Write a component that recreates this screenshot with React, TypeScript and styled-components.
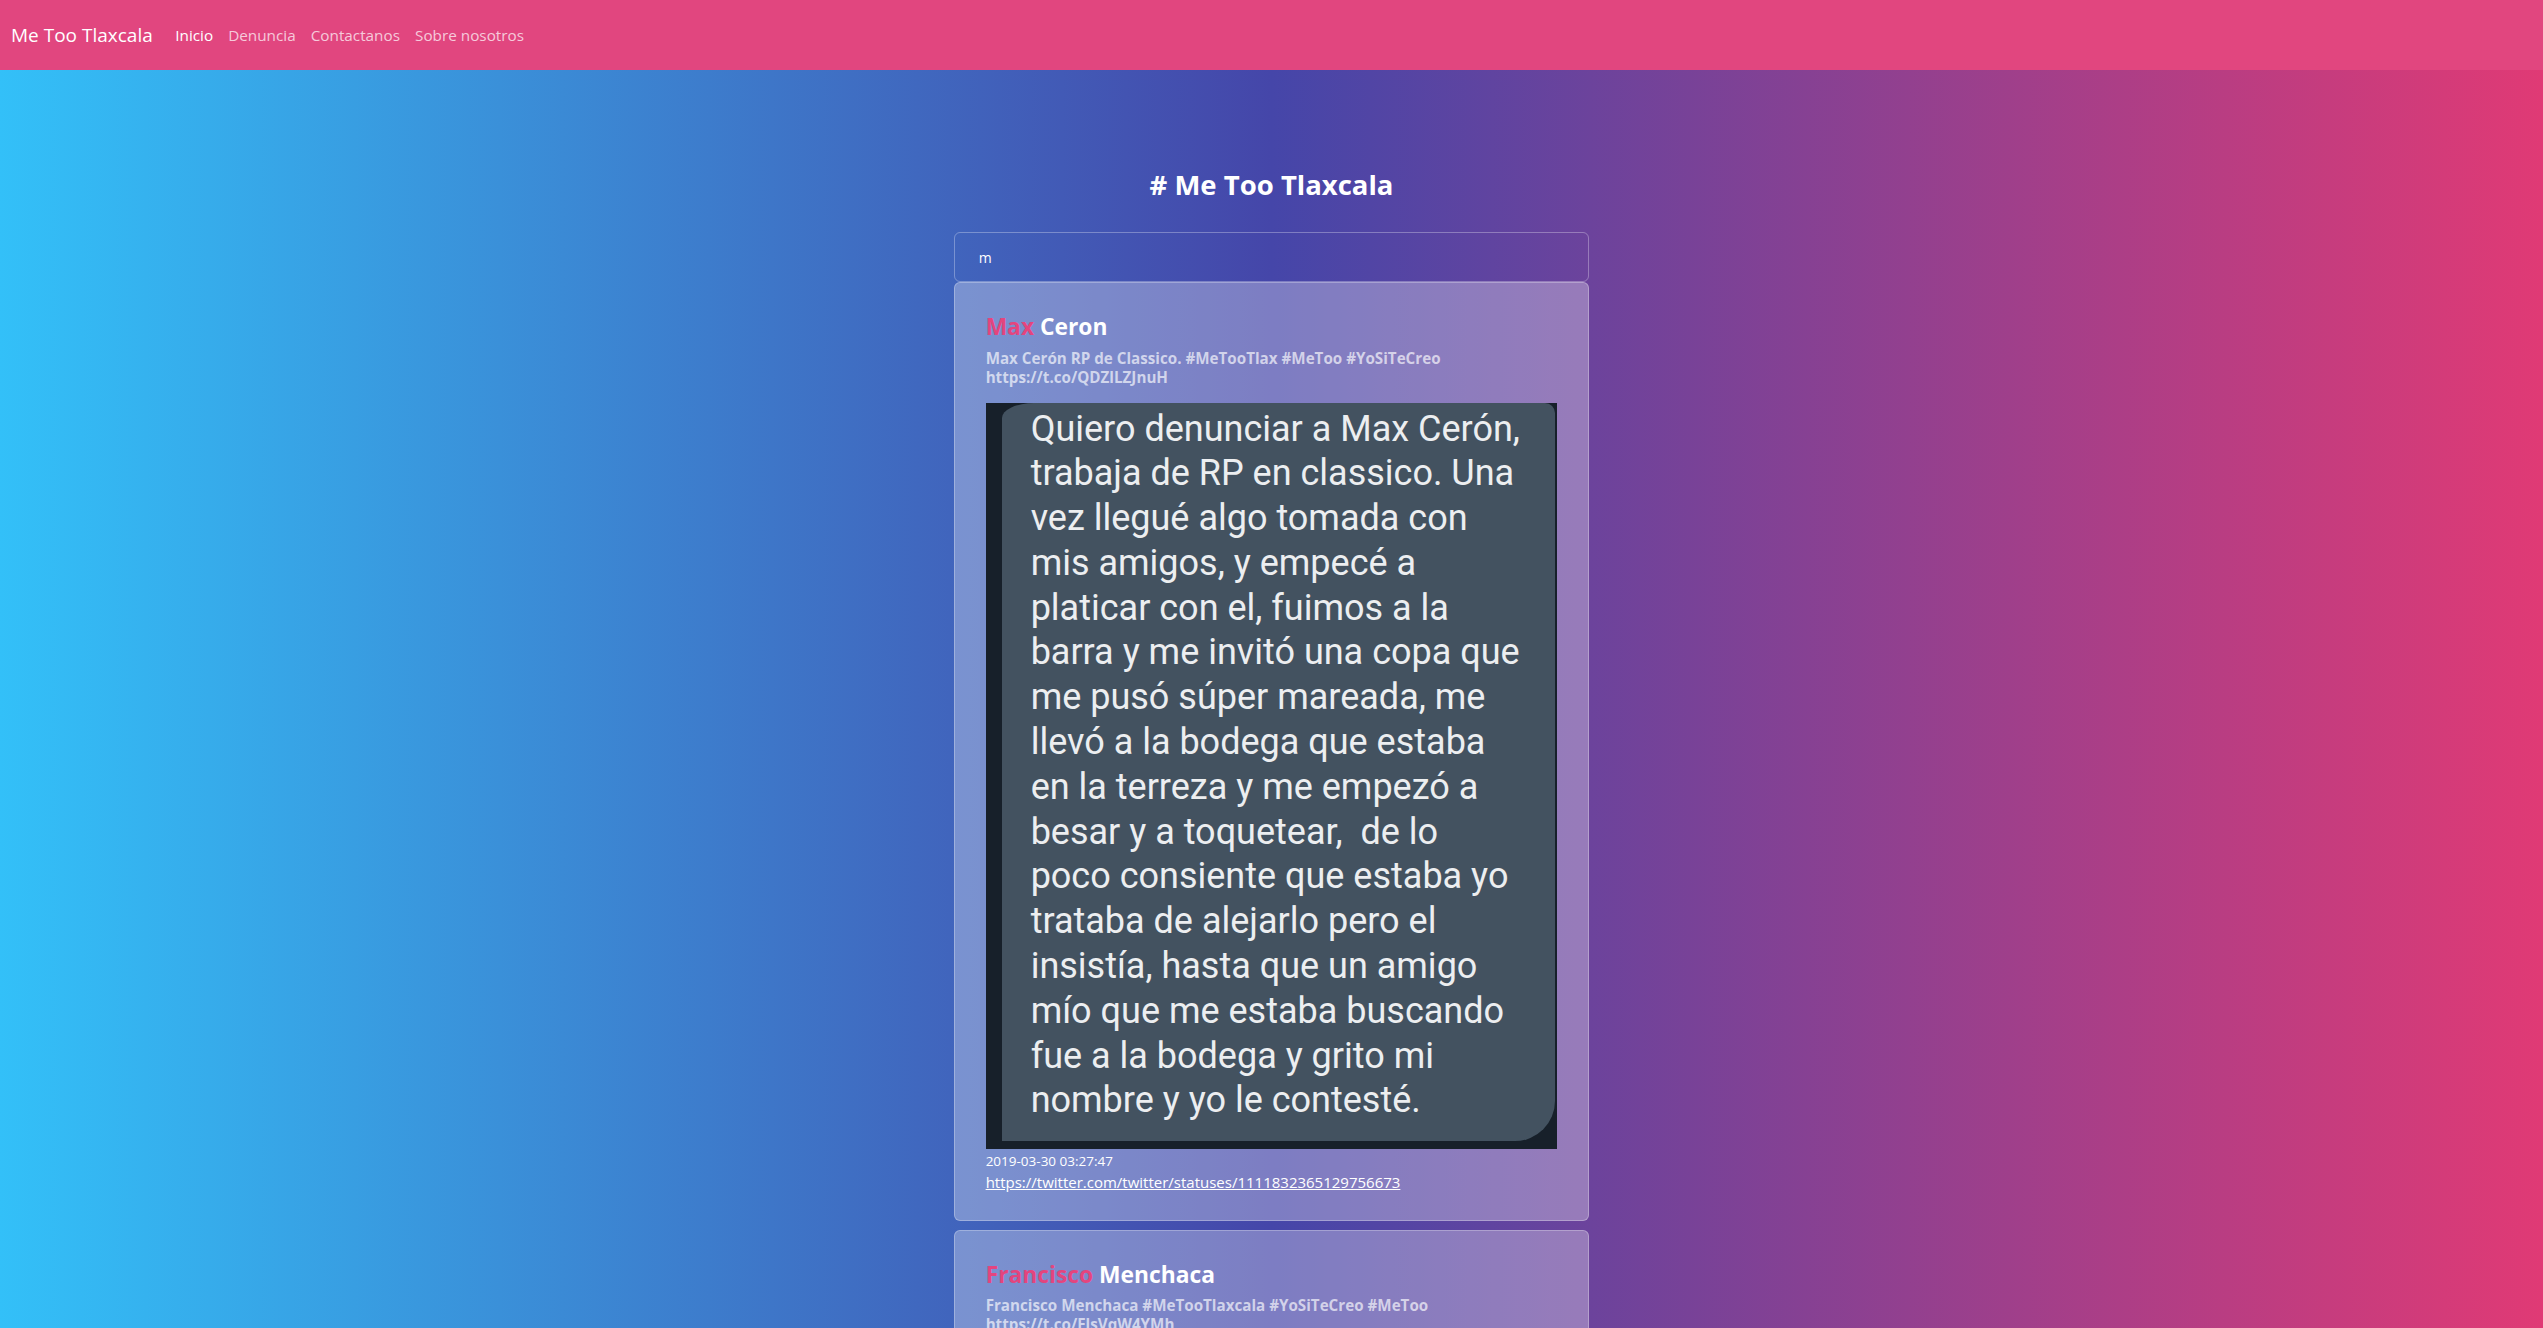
import React from "react";
import styled, { createGlobalStyle } from "styled-components";

const GlobalStyle = createGlobalStyle`
  html, body {
    margin: 0;
    padding: 0;
  }
  body {
    font-family: "Open Sans", "Noto Sans", sans-serif;
    background: linear-gradient(to right, #33c0f8 0%, #4546a9 50%, #e03a75 100%);
    background-attachment: fixed;
    min-height: 100vh;
    color: #fff;
  }
`;

const Navbar = styled.nav`
  height: 70px;
  display: flex;
  align-items: center;
  padding: 0 11px;
  background: #e1467f;
`;

const Brand = styled.a`
  font-size: 19px;
  color: #fff;
  margin-right: 15px;
  text-decoration: none;
`;

const NavList = styled.ul`
  display: flex;
  list-style: none;
  margin: 0;
  padding: 0;
`;

const NavLink = styled.a<{ $active?: boolean }>`
  display: block;
  padding: 0 7.5px;
  font-size: 15.3px;
  text-decoration: none;
  color: ${(p) => (p.$active ? "#fff" : "rgba(255,255,255,0.72)")};
`;

const Main = styled.main`
  width: 25%;
  margin: 0 auto;
  padding-top: 98px;
  padding-bottom: 40px;
`;

const Title = styled.h1`
  margin: 0 0 30px;
  text-align: center;
  font-size: 27.5px;
  font-weight: 700;
  line-height: 34px;
`;

const Search = styled.input`
  box-sizing: border-box;
  display: block;
  width: 100%;
  height: 50px;
  padding: 0 24px;
  background: transparent;
  border: 1px solid rgba(255, 255, 255, 0.3);
  border-radius: 6px;
  color: #fff;
  font-size: 14px;
  font-family: inherit;
  outline: none;
`;

const Feed = styled.div`
  display: flex;
  flex-direction: column;
  gap: 9px;
`;

const Card = styled.article`
  background: rgba(255, 255, 255, 0.3);
  border: 1px solid rgba(255, 255, 255, 0.28);
  border-radius: 6px;
  padding: 29px 31px 27px;
`;

const Name = styled.h4`
  margin: 0 0 7.5px;
  font-size: 22.8px;
  font-weight: 700;
  line-height: 29px;
`;

const FirstName = styled.span`
  color: #e4457e;
`;

const Desc = styled.p`
  margin: 0 0 16px;
  font-size: 15.2px;
  font-weight: 700;
  line-height: 19px;
  color: rgba(255, 255, 255, 0.66);
`;

const Shot = styled.div<{ $h: number }>`
  box-sizing: border-box;
  height: ${(p) => p.$h}px;
  background: #17202a;
  padding: 0 2px 8px 16px;
  display: flex;
`;

const Bubble = styled.div`
  flex: 1;
  background: #435260;
  border-radius: 32px 10px 40px 0 / 15px 10px 40px 0;
  padding: 4px 0 0 29px;
  font-family: Roboto, "Noto Sans", sans-serif;
  font-size: 36px;
  line-height: 44.8px;
  color: #eceef0;
  overflow: hidden;
`;

const BubbleLine = styled.span`
  display: block;
  white-space: pre;
`;

const Stamp = styled.div`
  margin-top: 3px;
  font-size: 13.5px;
  line-height: 18px;
`;

const TweetLink = styled.a`
  display: inline-block;
  margin-top: 2px;
  font-size: 15px;
  line-height: 21px;
  color: #fff;
  text-decoration: underline;
`;

type Post = {
  first: string;
  last: string;
  text: string;
  lines: string[];
  height: number;
  date: string;
  url: string;
};

const posts: Post[] = [
  {
    first: "Max",
    last: "Ceron",
    text: "Max Cerón RP de Classico. #MeTooTlax #MeToo #YoSiTeCreo https://t.co/QDZlLZJnuH",
    lines: [
      "Quiero denunciar a Max Cerón,",
      "trabaja de RP en classico. Una",
      "vez llegué algo tomada con",
      "mis amigos, y empecé a",
      "platicar con el, fuimos a la",
      "barra y me invitó una copa que",
      "me pusó súper mareada, me",
      "llevó a la bodega que estaba",
      "en la terreza y me empezó a",
      "besar y a toquetear,  de lo",
      "poco consiente que estaba yo",
      "trataba de alejarlo pero el",
      "insistía, hasta que un amigo",
      "mío que me estaba buscando",
      "fue a la bodega y grito mi",
      "nombre y yo le contesté.",
    ],
    height: 746,
    date: "2019-03-30 03:27:47",
    url: "https://twitter.com/twitter/statuses/1111832365129756673",
  },
  {
    first: "Francisco",
    last: "Menchaca",
    text: "Francisco Menchaca #MeTooTlaxcala #YoSiTeCreo #MeToo https://t.co/FlsVqW4YMh",
    lines: [
      "Quiero denunciar a Francisco",
      "Menchaca por acoso.",
    ],
    height: 300,
    date: "2019-03-29 21:14:05",
    url: "https://twitter.com/twitter/statuses/1111739102478848001",
  },
];

export default function App() {
  return (
    <>
      <GlobalStyle />
      <Navbar>
        <Brand href="#">Me Too Tlaxcala</Brand>
        <NavList>
          <li>
            <NavLink href="#" $active>
              Inicio
            </NavLink>
          </li>
          <li>
            <NavLink href="#">Denuncia</NavLink>
          </li>
          <li>
            <NavLink href="#">Contactanos</NavLink>
          </li>
          <li>
            <NavLink href="#">Sobre nosotros</NavLink>
          </li>
        </NavList>
      </Navbar>
      <Main>
        <Title># Me Too Tlaxcala</Title>
        <Search defaultValue="m" />
        <Feed>
          {posts.map((p) => (
            <Card key={p.url}>
              <Name>
                <FirstName>{p.first}</FirstName> {p.last}
              </Name>
              <Desc>{p.text}</Desc>
              <Shot $h={p.height}>
                <Bubble>
                  {p.lines.map((l, i) => (
                    <BubbleLine key={i}>{l}</BubbleLine>
                  ))}
                </Bubble>
              </Shot>
              <Stamp>{p.date}</Stamp>
              <TweetLink href={p.url}>{p.url}</TweetLink>
            </Card>
          ))}
        </Feed>
      </Main>
    </>
  );
}
